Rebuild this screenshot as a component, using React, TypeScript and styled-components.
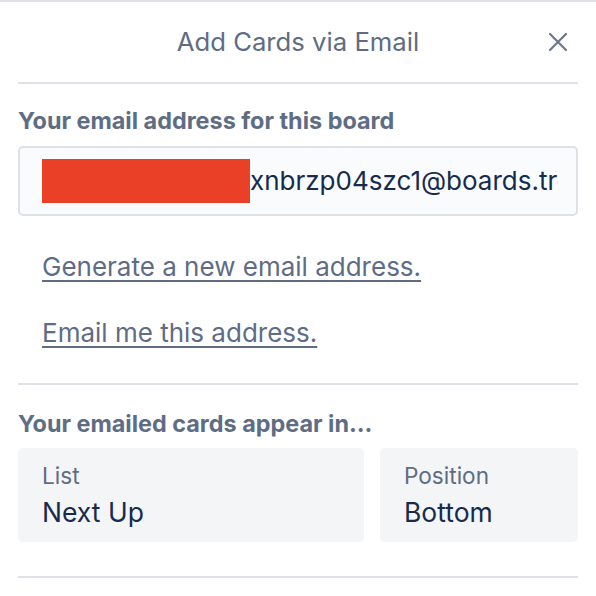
import React from "react";
import styled, { createGlobalStyle } from "styled-components";

const Global = createGlobalStyle`
  html, body { margin: 0; padding: 0; background: #ffffff; }
  body { font-family: Inter, "Liberation Sans", Arial, sans-serif; -webkit-font-smoothing: antialiased; }
`;

const Panel = styled.div`
  width: 596px;
  height: 596px;
  box-sizing: border-box;
  border-top: 2px solid #dfe1e6;
  background: #fff;
  overflow: hidden;
`;

const Header = styled.header`
  display: grid;
  grid-template-columns: 1fr auto 1fr;
  align-items: center;
  height: 80px;
  padding: 0 29px;
`;

const Title = styled.h2`
  grid-column: 2;
  margin: 0;
  font-size: 25.7px;
  font-weight: 400;
  line-height: 32px;
  color: #5e6c84;
`;

const CloseButton = styled.button`
  grid-column: 3;
  justify-self: end;
  display: flex;
  align-items: center;
  justify-content: center;
  width: 18px;
  height: 18px;
  padding: 0;
  border: 0;
  background: none;
  color: #6b778c;
  cursor: pointer;
`;

const Divider = styled.hr`
  margin: 0 18px;
  height: 2px;
  border: 0;
  background: #dfe1e6;
`;

const Section = styled.section<{ $top: number; $bottom: number }>`
  padding: ${(p) => p.$top}px 18px ${(p) => p.$bottom}px;
`;

const Label = styled.h3`
  margin: 0;
  font-size: 23.4px;
  font-weight: 700;
  line-height: 24px;
  color: #5e6c84;
`;

const EmailField = styled.div`
  margin-top: 13px;
  height: 70px;
  box-sizing: border-box;
  border: 2px solid #dfe1e6;
  border-radius: 5px;
  background: #fafbfc;
  padding: 0 18px 0 22px;
  display: flex;
  align-items: center;
  overflow: hidden;
  white-space: nowrap;
  font-size: 26px;
  color: #172b4d;
`;

const Redaction = styled.span`
  display: inline-block;
  flex: none;
  width: 208px;
  height: 44px;
  background: #eb4028;
`;

const EmailText = styled.span`
  flex: 1;
  overflow: hidden;
  white-space: nowrap;
  line-height: 32px;
`;

const LinkList = styled.div`
  display: flex;
  flex-direction: column;
  gap: 34px;
  padding: 35px 42px 34px;
`;

const TextLink = styled.a`
  align-self: flex-start;
  font-size: 26px;
  line-height: 32px;
  color: #5e6c84;
  text-decoration: underline;
  text-decoration-thickness: 2px;
  text-underline-offset: 4px;
  cursor: pointer;
`;

const Cards = styled.div`
  margin-top: 12px;
  display: grid;
  grid-template-columns: 346px 1fr;
  gap: 16px;
`;

const Card = styled.div`
  height: 94px;
  box-sizing: border-box;
  border-radius: 5px;
  background: #f4f5f7;
  padding: 16px 24px;
  display: flex;
  flex-direction: column;
  gap: 10px;
`;

const CardLabel = styled.span`
  font-size: 22.6px;
  line-height: 24px;
  color: #5e6c84;
`;

const CardValue = styled.span`
  font-size: 26.5px;
  line-height: 28px;
  color: #172b4d;
`;

export default function App() {
  return (
    <>
      <Global />
      <Panel>
        <Header>
          <Title>Add Cards via Email</Title>
          <CloseButton aria-label="Close">
            <svg width="18" height="18" viewBox="0 0 18 18" fill="none">
              <path d="M1 1L17 17M17 1L1 17" stroke="currentColor" strokeWidth="2.2" strokeLinecap="round" />
            </svg>
          </CloseButton>
        </Header>
        <Divider />
        <Section $top={25} $bottom={0}>
          <Label>Your email address for this board</Label>
          <EmailField>
            <Redaction />
            <EmailText>xnbrzp04szc1@boards.trello.com</EmailText>
          </EmailField>
        </Section>
        <LinkList>
          <TextLink>Generate a new email address.</TextLink>
          <TextLink>Email me this address.</TextLink>
        </LinkList>
        <Divider />
        <Section $top={27} $bottom={34}>
          <Label>Your emailed cards appear in...</Label>
          <Cards>
            <Card>
              <CardLabel>List</CardLabel>
              <CardValue>Next Up</CardValue>
            </Card>
            <Card>
              <CardLabel>Position</CardLabel>
              <CardValue>Bottom</CardValue>
            </Card>
          </Cards>
        </Section>
        <Divider />
      </Panel>
    </>
  );
}
